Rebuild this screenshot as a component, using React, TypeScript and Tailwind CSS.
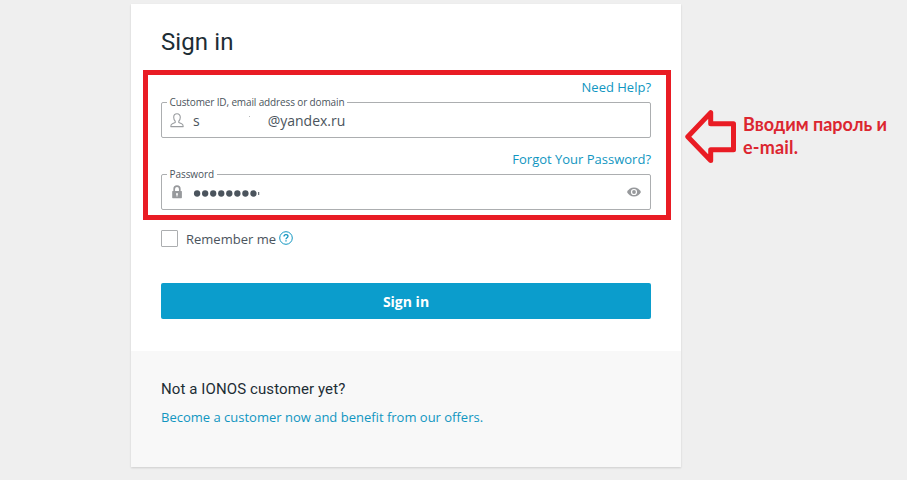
import type { ReactNode } from "react";

type FieldProps = {
  label: string;
  labelClass: string;
  icon: ReactNode;
  children: ReactNode;
};

function Field({ label, labelClass, icon, children }: FieldProps) {
  return (
    <div className="relative flex h-9 items-center rounded-[2px] border border-[#acaeb0] pl-[8px] pr-[9px]">
      <span
        className={`absolute -top-[8px] left-[5px] bg-white pl-[2.500px] pr-[3px] text-[10px] leading-[14px] whitespace-nowrap text-[#4b545d] ${labelClass}`}
      >
        {label}
      </span>
      {icon}
      {children}
    </div>
  );
}

function UserIcon() {
  return (
    <svg className="h-[15px] w-[14px] shrink-0" viewBox="0 0 14 15" fill="none" stroke="#9a9da0" strokeWidth="1.1" strokeLinejoin="round">
      <path d="M7 .8C4.800.8 3.700 2.200 3.700 4.300c0 1.900.6 3 1.500 3.900v1.400L2.300 10.800C1.200 11.200.8 12 .8 13.600h12.400c0-1.600-.4-2.400-1.500-2.800L8.800 9.600V8.200c.9-.9 1.500-2 1.500-3.900C10.300 2.200 9.200.8 7 .8Z" />
    </svg>
  );
}

function LockIcon() {
  return (
    <svg className="h-[14px] w-[14px] shrink-0" viewBox="0 0 14 14">
      <path d="M4.200 6.500V3.900a2.800 2.800 0 0 1 5.600 0v2.600" fill="none" stroke="#97999c" strokeWidth="1.700" />
      <rect x="2.200" y="6" width="9.700" height="7.200" rx=".6" fill="#97999c" />
      <path d="M7 8.100a1 1 0 0 1 .5 1.850V11.600h-1V9.950A1 1 0 0 1 7 8.100Z" fill="#fff" />
    </svg>
  );
}

function EyeIcon() {
  return (
    <svg className="ml-auto h-[10px] w-[14px] shrink-0" viewBox="0 0 14 10">
      <path d="M7 .5C3.800.5 1.200 2.300 0 5c1.200 2.700 3.800 4.500 7 4.500S12.800 7.700 14 5C12.800 2.300 10.200.5 7 .5Z" fill="#97999c" />
      <circle cx="7" cy="5" r="3.100" fill="#fff" />
      <circle cx="7" cy="5" r="1.900" fill="#97999c" />
    </svg>
  );
}

function PasswordDots() {
  return (
    <svg className="ml-[9px] mt-[3px] h-[7px] w-[67px]" viewBox="0 0 67 7" fill="#4b545d">
      {Array.from({ length: 8 }, (_, i) => (
        <circle key={i} cx={4.100 + i * 8.050} cy="3.500" r="3.150" />
      ))}
      <rect x="65.200" y="2" width="1" height="3" />
    </svg>
  );
}

export default function App() {
  return (
    <div className="flex h-[480px] w-[907px] items-start overflow-hidden bg-[#efefef] pl-[131px] pt-1 font-['Open_Sans',sans-serif]">
      <main className="flex h-[463px] w-[550px] shrink-0 flex-col bg-white shadow-[0_1px_2px_rgba(0,0,0,0.14)]">
        <h1 className="h-[66px] pl-[30px] pt-[22px] font-['Roboto',sans-serif] text-[24px] leading-8 tracking-[0.1px] text-[#1d2d35]">
          Sign in
        </h1>
        <section className="ml-3 h-[150px] w-[528px] border-[5px] border-[#e91c24] pl-[13px] pr-[15px]">
          <div className="flex h-[27px] justify-end pt-[2px] text-[13px] leading-5 text-[#1196c1]">
            <a>Need Help?</a>
          </div>
          <Field label="Customer ID, email address or domain" labelClass="tracking-[-0.13px]" icon={<UserIcon />}>
            <span className="ml-[9px] mt-[2px] text-[14px] leading-5 text-[#4b545d]">s</span>
            <span className="relative ml-[68px] mt-[2px] text-[14px] leading-5 text-[#4b545d]">
              @yandex.ru
              <i className="absolute -left-[19px] top-[5px] h-px w-px bg-[#b5b8ba]" />
            </span>
          </Field>
          <div className="flex h-9 justify-end pt-[11px] text-[13px] leading-5 text-[#1196c1]">
            <a>Forgot Your Password?</a>
          </div>
          <Field label="Password" labelClass="tracking-[-0.06px]" icon={<LockIcon />}>
            <PasswordDots />
            <EyeIcon />
          </Field>
        </section>
        <div className="flex h-[63px] items-start pl-[30px] pt-[10px]">
          <span className="h-[17px] w-[17px] rounded-[1px] border border-[#acaeb0]" />
          <span className="ml-2 text-[13px] leading-[18px] text-[#4b545d]">Remember me</span>
          <svg className="ml-[3px] mt-px h-[14px] w-[14px]" viewBox="0 0 14 14" fill="none" stroke="#1196c1">
            <circle cx="7" cy="7" r="6.300" strokeWidth="1" />
            <path d="M5 5.500C5 4.300 5.800 3.600 7 3.600s2 .7 2 1.700c0 1.500-2 1.500-2 3M7 9.300v1.300" strokeWidth="1.300" />
          </svg>
        </div>
        <button className="mx-[30px] h-9 shrink-0 rounded-[2px] bg-[#0b9dcc] pt-[2px] text-[14px] font-bold leading-5 text-white">
          Sign in
        </button>
        <footer className="mt-8 flex-1 bg-[#f8f8f8] pl-[30px] pt-[28px]">
          <h2 className="font-['Roboto',sans-serif] text-[15px] leading-5 tracking-[0.1px] text-[#1d2d35]">Not a IONOS customer yet?</h2>
          <a className="mt-2 block text-[13px] leading-5 text-[#1196c1]">Become a customer now and benefit from our offers.</a>
        </footer>
      </main>
      <aside className="ml-1 mt-[105px] flex">
        <svg className="h-[56px] w-[52px] shrink-0" viewBox="0 0 52 56" fill="none" stroke="#e91c24" strokeWidth="5" strokeLinejoin="round">
          <path d="M2.800 27.800 25.700 3.600v11.200h22.800v26H25.700v10.800Z" />
        </svg>
        <p className="ml-[6px] mt-[4px] whitespace-nowrap font-['Lato',sans-serif] text-[18px] font-bold leading-[23px] text-[#dc2630]">
          Вводим пароль и
          <br />
          <span className="tracking-[0.2px]">e-mail.</span>
        </p>
      </aside>
    </div>
  );
}
